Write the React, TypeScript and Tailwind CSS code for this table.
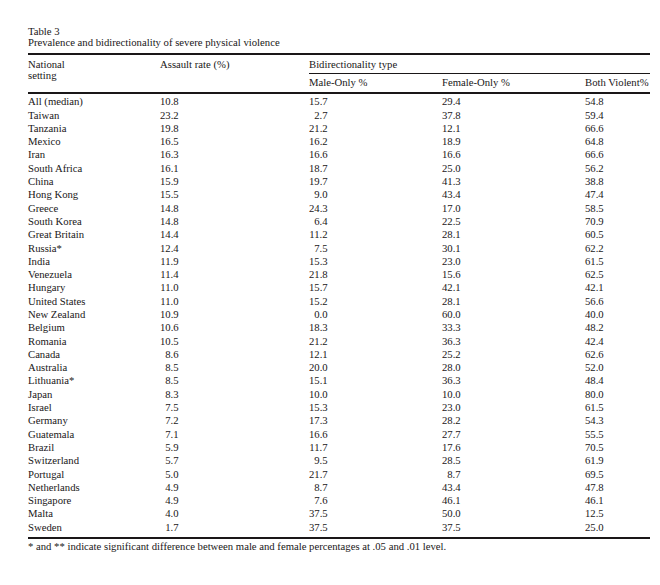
import React from "react";

const rows: [string, string, string, string, string][] = [
  ["All (median)", "10.8", "15.7", "29.4", "54.8"],
  ["Taiwan", "23.2", "2.7", "37.8", "59.4"],
  ["Tanzania", "19.8", "21.2", "12.1", "66.6"],
  ["Mexico", "16.5", "16.2", "18.9", "64.8"],
  ["Iran", "16.3", "16.6", "16.6", "66.6"],
  ["South Africa", "16.1", "18.7", "25.0", "56.2"],
  ["China", "15.9", "19.7", "41.3", "38.8"],
  ["Hong Kong", "15.5", "9.0", "43.4", "47.4"],
  ["Greece", "14.8", "24.3", "17.0", "58.5"],
  ["South Korea", "14.8", "6.4", "22.5", "70.9"],
  ["Great Britain", "14.4", "11.2", "28.1", "60.5"],
  ["Russia*", "12.4", "7.5", "30.1", "62.2"],
  ["India", "11.9", "15.3", "23.0", "61.5"],
  ["Venezuela", "11.4", "21.8", "15.6", "62.5"],
  ["Hungary", "11.0", "15.7", "42.1", "42.1"],
  ["United States", "11.0", "15.2", "28.1", "56.6"],
  ["New Zealand", "10.9", "0.0", "60.0", "40.0"],
  ["Belgium", "10.6", "18.3", "33.3", "48.2"],
  ["Romania", "10.5", "21.2", "36.3", "42.4"],
  ["Canada", "8.6", "12.1", "25.2", "62.6"],
  ["Australia", "8.5", "20.0", "28.0", "52.0"],
  ["Lithuania*", "8.5", "15.1", "36.3", "48.4"],
  ["Japan", "8.3", "10.0", "10.0", "80.0"],
  ["Israel", "7.5", "15.3", "23.0", "61.5"],
  ["Germany", "7.2", "17.3", "28.2", "54.3"],
  ["Guatemala", "7.1", "16.6", "27.7", "55.5"],
  ["Brazil", "5.9", "11.7", "17.6", "70.5"],
  ["Switzerland", "5.7", "9.5", "28.5", "61.9"],
  ["Portugal", "5.0", "21.7", "8.7", "69.5"],
  ["Netherlands", "4.9", "8.7", "43.4", "47.8"],
  ["Singapore", "4.9", "7.6", "46.1", "46.1"],
  ["Malta", "4.0", "37.5", "50.0", "12.5"],
  ["Sweden", "1.7", "37.5", "37.5", "25.0"],
];

function Num({ v }: { v: string }) {
  return <div className="w-[18.6px] text-right whitespace-nowrap">{v}</div>;
}

export default function App() {
  return (
    <div
      className="w-[660px] h-[585px] bg-white text-[#1a1718] text-[10.7px] pt-[26px] pl-[28px]"
      style={{ fontFamily: '"Liberation Serif", "Times New Roman", serif' }}
    >
      <div className="w-[622px]">
        <div className="leading-[11px]">
          <div>Table 3</div>
          <div>Prevalence and bidirectionality of severe physical violence</div>
        </div>
        <div className="mt-[5px] h-[2px] bg-[#1a1718]" />
        {/* header */}
        <div className="flex leading-[11px]">
          <div className="w-[132px] pt-[4px]">
            <div>National</div>
            <div>setting</div>
          </div>
          <div className="w-[149px] pt-[4px]">Assault rate (%)</div>
          <div className="flex-1">
            <div className="pt-[4px] pb-[3px] border-b border-[#1a1718]">Bidirectionality type</div>
            <div className="flex h-[18px] pt-[3px]">
              <div className="w-[133px]">Male-Only %</div>
              <div className="w-[143px]">Female-Only %</div>
              <div className="whitespace-nowrap">Both Violent%</div>
            </div>
          </div>
        </div>
        <div className="h-[2px] bg-[#1a1718]" />
        {/* body */}
        <div className="pt-[1.25px] pb-[2.5px] leading-[13.3px]">
          {rows.map((r) => (
            <div key={r[0]} className="flex h-[13.3px]">
              <div className="w-[132px] whitespace-nowrap">{r[0]}</div>
              <div className="w-[149px]">
                <Num v={r[1]} />
              </div>
              <div className="w-[133px]">
                <Num v={r[2]} />
              </div>
              <div className="w-[143px]">
                <Num v={r[3]} />
              </div>
              <div className="flex-1">
                <Num v={r[4]} />
              </div>
            </div>
          ))}
        </div>
        <div className="h-[2px] bg-[#1a1718]" />
        <div className="mt-[2px] leading-[11px] whitespace-nowrap">
          * and ** indicate significant difference between male and female percentages at .05 and .01 level.
        </div>
      </div>
    </div>
  );
}
